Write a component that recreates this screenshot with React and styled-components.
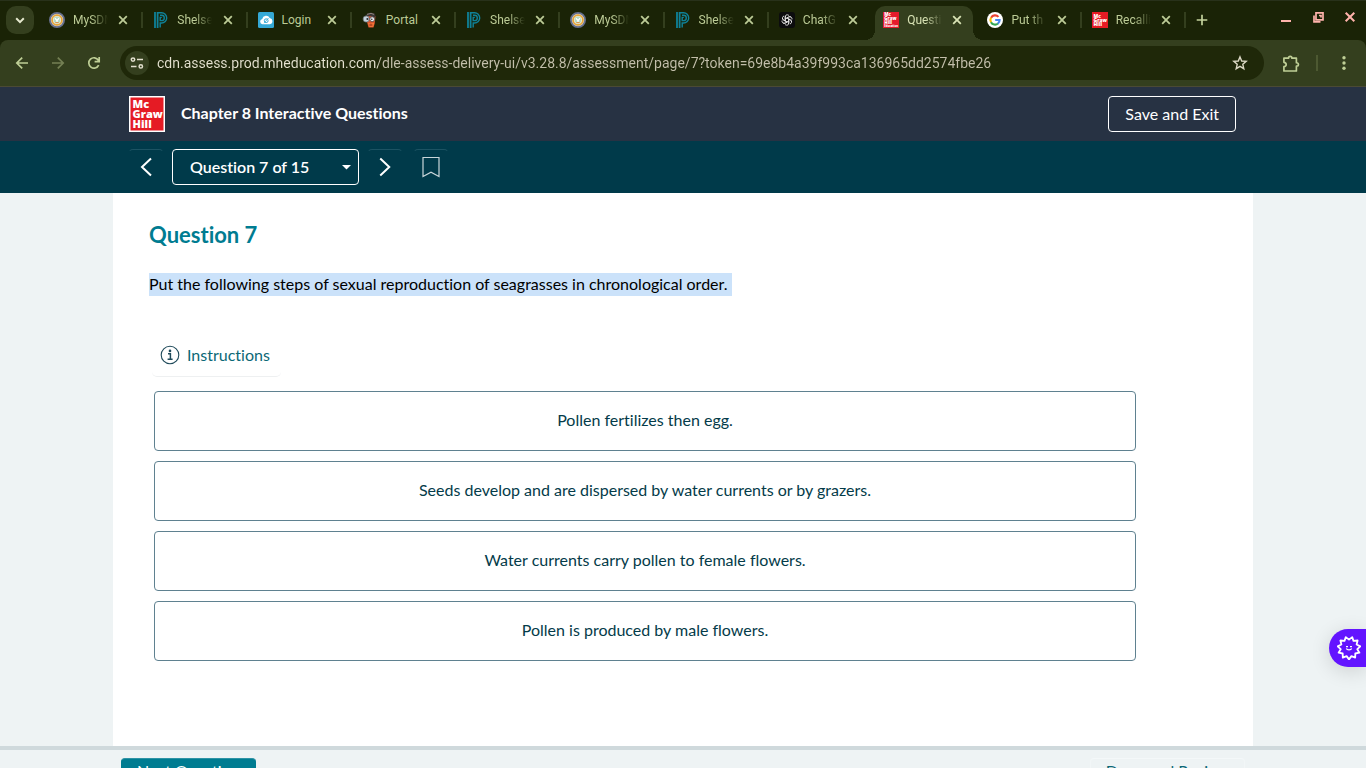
import React from "react";
import styled, { createGlobalStyle, css } from "styled-components";

const ui = `Lato, "Open Sans", sans-serif`;
const chromeFont = `Roboto, "Noto Sans", sans-serif`;

const Global = createGlobalStyle`
  * { box-sizing: border-box; }
  html, body { margin: 0; padding: 0; }
  body { font-family: ${ui}; font-size: 16px; font-variant-ligatures: none; background: #eef3f4; }
  button, input, select { font: inherit; font-variant-ligatures: none; margin: 0; }
  svg { display: block; flex: none; }
`;

const Page = styled.div`
  display: flex;
  flex-direction: column;
  height: 100vh;
  overflow: hidden;
`;

/* ---------- browser frame ---------- */
const TabStrip = styled.div`
  display: flex;
  align-items: center;
  height: 40px;
  padding-left: 6px;
  background: #1a2306;
  box-shadow: inset 0 1px #28311a;
  font-family: ${chromeFont};
  flex: none;
`;

const TabSearch = styled.button`
  display: grid;
  place-items: center;
  width: 28px;
  height: 28px;
  margin-right: 5px;
  padding: 0;
  border: 0;
  border-radius: 10px;
  background: #343f1e;
  color: #e6e9cf;
`;

const Tabs = styled.div`
  display: flex;
  flex: 1;
  min-width: 0;
  height: 100%;
`;

const Tab = styled.div`
  position: relative;
  display: flex;
  align-items: center;
  flex: 1 1 0;
  min-width: 0;
  padding-left: 10px;
  color: ${(p) => (p.$active ? "#d9e3b5" : "#bccb96")};
`;

const ActiveShape = styled.div`
  position: absolute;
  inset: 6px 4px 0 2px;
  border-radius: 10px 10px 0 0;
  background: #343f1e;
  &::before, &::after {
    content: "";
    position: absolute;
    bottom: 0;
    width: 10px;
    height: 10px;
  }
  &::before {
    right: 100%;
    background: radial-gradient(circle at 0 0, transparent 10px, #343f1e 10px);
  }
  &::after {
    left: 100%;
    background: radial-gradient(circle at 100% 0, transparent 10px, #343f1e 10px);
  }
`;

const TabBody = styled.div`
  position: relative;
  display: flex;
  align-items: center;
  flex: 1;
  min-width: 0;
`;

const TabTitle = styled.span`
  flex: 1;
  min-width: 0;
  margin-left: 8px;
  overflow: hidden;
  white-space: nowrap;
  font-size: 12px;
  line-height: 16px;
  ${(p) =>
    p.$fade &&
    css`
      mask-image: linear-gradient(to right, #000 18px, transparent 35px);
    `}
`;

const CloseTab = styled.button`
  display: grid;
  place-items: center;
  width: 16px;
  height: 16px;
  margin: 0 10px 0 5px;
  padding: 0;
  border: 0;
  background: none;
  color: inherit;
`;

const Divider = styled.span`
  width: 2px;
  height: 16px;
  flex: none;
  background: ${(p) => (p.$hidden ? "transparent" : p.$color || "#343f1e")};
`;

const StripEnd = styled.div`
  display: flex;
  align-items: center;
  justify-content: space-between;
  width: 180px;
  padding: 0 8px;
`;

const WindowControls = styled.div`
  display: flex;
  gap: 16px;
  margin-bottom: 6px;
  color: #ffb3ac;
`;

const PlainButton = styled.button`
  display: grid;
  place-items: center;
  width: 16px;
  height: 16px;
  padding: 0;
  border: 0;
  background: none;
  color: ${(p) => p.$color || "inherit"};
`;

const ToolbarBack = styled.div`
  flex: none;
  background: #1a2306;
`;

const Toolbar = styled.div`
  display: flex;
  align-items: center;
  height: 47px;
  padding: 0 14px;
  background: #343f1e;
  border-bottom: 1px solid #4b4a34;
  border-radius: 8px 8px 0 0;
  font-family: ${chromeFont};
`;

const NavIcons = styled.div`
  display: flex;
  gap: 20px;
  margin-right: 18px;
  color: #bfcf96;
`;

const AddressBar = styled.div`
  display: flex;
  align-items: center;
  flex: 1;
  min-width: 0;
  height: 34px;
  padding: 0 16px 0 5px;
  border-radius: 17px;
  background: #1f2809;
`;

const SiteInfo = styled.button`
  display: grid;
  place-items: center;
  width: 24px;
  height: 24px;
  flex: none;
  padding: 0;
  border: 0;
  border-radius: 50%;
  background: #343f1e;
  color: #e3e0cf;
`;

const Url = styled.input`
  flex: 1;
  min-width: 0;
  margin-left: 8px;
  padding: 0;
  border: 0;
  outline: 0;
  font-size: 14px;
  line-height: 20px;
  color: transparent;
  background: linear-gradient(to right, #e5e2d0 221px, #c3bfab 221px);
  background-clip: text;
`;

const ToolbarEnd = styled.div`
  display: flex;
  align-items: center;
  gap: 18px;
  margin-left: 18px;
  color: #bfcf96;
`;

/* ---------- assessment page ---------- */
const Bar = styled.div`
  flex: none;
  background: ${(p) => p.$bg};
`;

const BarInner = styled.div`
  display: flex;
  align-items: center;
  max-width: 1140px;
  height: ${(p) => p.$height}px;
  margin: 0 auto;
  padding: 0 17px 0 ${(p) => p.$left}px;
`;

const Title = styled.h1`
  flex: 1;
  margin: 0 0 0 16px;
  padding-bottom: 2px;
  color: #fff;
  font-size: 16px;
  line-height: 24px;
  font-weight: 700;
`;

const SaveButton = styled.button`
  height: 36px;
  padding: 0 16px 2px;
  border: 1px solid #fff;
  border-radius: 4px;
  background: transparent;
  color: #fff;
  font-size: 16px;
`;

const IconButton = styled.button`
  display: grid;
  place-items: center;
  width: 36px;
  height: 36px;
  padding: 0;
  border: 1px solid transparent;
  border-top-color: #1c5363;
  border-radius: 5px;
  background: transparent;
  color: #fff;
`;

const SelectWrap = styled.label`
  position: relative;
  width: 187px;
  margin: 0 8px;
  color: #fff;
  & > svg {
    position: absolute;
    right: 8px;
    top: 16px;
    pointer-events: none;
  }
`;

const Select = styled.select`
  display: block;
  appearance: none;
  width: 100%;
  height: 36px;
  padding: 0 17px 2px;
  border: 1px solid #fff;
  border-radius: 4px;
  background: transparent;
  color: #fff;
  font-size: 16px;
  font-weight: 600;
`;

const NextGroup = styled.div`
  display: flex;
  gap: 10px;
`;

const Main = styled.main`
  flex: 1;
  min-height: 0;
  width: 100%;
  max-width: 1140px;
  margin: 0 auto;
  padding: 28px 112px 0 36px;
  background: #fff;
`;

const Heading = styled.h2`
  margin: 0 0 24px;
  color: #007c91;
  font-size: 22px;
  line-height: 28px;
  font-weight: 700;
`;

const Prompt = styled.p`
  margin: 0 0 44px;
  color: #000;
  font-size: 16px;
  line-height: 21px;
  & > mark {
    display: inline-block;
    padding: 0 4px 2px 0;
    background: #cbe2fa;
    color: inherit;
  }
`;

const Instructions = styled.button`
  display: flex;
  align-items: center;
  gap: 7px;
  height: 37px;
  margin: 0 3px 14px;
  padding: 0 11px 7px 8px;
  border: 0;
  border-bottom: 1px solid #eef0f1;
  border-radius: 5px;
  background: transparent;
  color: #0b6876;
  font-size: 16px;
  line-height: 20px;
`;

const Choices = styled.ul`
  display: flex;
  flex-direction: column;
  gap: 10px;
  margin: 0;
  padding: 0 5px;
  list-style: none;
`;

const Choice = styled.button`
  display: block;
  width: 100%;
  height: 60px;
  padding: 0 16px 2px;
  border: 1px solid #5f8190;
  border-radius: 4px;
  background: #fff;
  color: #043b49;
  font-size: 16px;
  line-height: 24px;
`;

const Footer = styled.footer`
  flex: none;
  height: 22px;
  overflow: hidden;
  background: #eef3f4;
  border-top: 4px solid #cfd9dc;
`;

const FooterInner = styled.div`
  display: flex;
  justify-content: space-between;
  max-width: 1140px;
  margin: 0 auto;
  padding: 8px;
`;

const FooterButton = styled.button`
  height: 36px;
  padding: 0 15px 10px;
  border: 1px solid ${(p) => (p.$primary ? "#007c91" : "#f2f6f7")};
  border-top-color: ${(p) => (p.$primary ? "#2e93a5" : "#f4f8f9")};
  border-radius: 4px;
  background: ${(p) => (p.$primary ? "#007c91" : "transparent")};
  color: ${(p) => (p.$primary ? "#fff" : "#0b6876")};
  font-size: 16px;
  line-height: 24px;
`;

const Assistant = styled.button`
  position: fixed;
  right: 0;
  bottom: 101px;
  display: flex;
  align-items: center;
  width: 37px;
  height: 38px;
  padding: 0 0 0 8px;
  border: 0;
  border-radius: 19px 0 0 19px;
  background: #6314ff;
  color: #fff;
  box-shadow: 0 4px 20px rgba(0, 0, 0, 0.14);
`;

/* ---------- drawings ---------- */
const Line = ({ size = 16, w = 2, children, ...rest }) => (
  <svg width={size} height={size} viewBox="0 0 16 16" fill="none" stroke="currentColor" strokeWidth={w} aria-hidden="true" {...rest}>
    {children}
  </svg>
);

const McGraw = ({ size, framed }) => (
  <svg width={size} height={size} viewBox="0 0 36 36" aria-label="McGraw Hill">
    <rect width="36" height="36" fill={framed ? "#fff" : "#e51b24"} />
    {framed && <rect x="1.5" y="1.5" width="33" height="33" fill="#e51b24" />}
    <text fill="#fff" fontFamily='"Open Sans", sans-serif' fontWeight="800" fontSize="11">
      <tspan x="3.6" y="12.4">Mc</tspan>
      <tspan x="3.6" y="22">Graw</tspan>
      <tspan x="3.6" y="31.6">Hill</tspan>
    </text>
  </svg>
);

const McGrawEducation = () => (
  <svg width="16" height="16" viewBox="0 0 36 36" aria-label="McGraw Hill Education">
    <rect width="36" height="36" fill="#e51b2c" />
    <text fill="#fff" fontFamily='"Open Sans", sans-serif' fontWeight="800" fontSize="10">
      <tspan x="3" y="10">Mc</tspan>
      <tspan x="3" y="18.5">Graw</tspan>
      <tspan x="3" y="27">Hill</tspan>
      <tspan x="3" y="34" fontSize="6">Education</tspan>
    </text>
  </svg>
);

const Seal = () => (
  <svg width="16" height="16" viewBox="0 0 16 16">
    <circle cx="8" cy="8" r="7.1" fill="#d9d2c4" stroke="#66708f" strokeWidth="1.8" />
    <circle cx="8" cy="8" r="4.9" fill="#f7eedb" stroke="#e5a436" strokeWidth="1.7" />
    <circle cx="8" cy="8" r="3.4" fill="#b5dcc2" />
    <path d="M6 6.1 8 8.7l2-2.6M8 8.7v2.1" stroke="#fff" strokeWidth="1.3" fill="none" />
    <path d="M6.4 10.6h3.2" stroke="#dc8a44" strokeWidth="1" />
  </svg>
);

const PowerSchool = () => (
  <svg width="16" height="16" viewBox="0 0 16 16" fill="none" stroke="#0f8299">
    <path d="M2 0v16M4.6 0v16" strokeWidth="1.8" />
    <path d="M5 .8h3.6a5 5 0 0 1 0 10.2H7.2V15.5M7 3.2h1.6a2.7 2.7 0 0 1 0 5.4H7.2V5.4h1.6" strokeWidth="1.4" />
  </svg>
);

const CloudLogin = () => (
  <svg width="16" height="16" viewBox="0 0 16 16">
    <rect width="16" height="16" rx="1.5" fill="#35a9d6" />
    <path d="M4.5 12.3a2.7 2.7 0 0 1-.3-5.3A4 4 0 0 1 11.7 6a3.2 3.2 0 0 1 .2 6.3z" fill="#fff" />
    <circle cx="8.2" cy="8.7" r="1.9" fill="none" stroke="#35a9d6" strokeWidth="1" />
    <path d="M6 11.2 10.5 6" stroke="#35a9d6" strokeWidth=".8" />
  </svg>
);

const PortalIcon = () => (
  <svg width="16" height="16" viewBox="0 0 16 16">
    <path d="M4 4h9.5l-.8 7.5-1.2 4H6.5L5 10z" fill="#d9542c" />
    <path d="M3 4.2 5.4 1.6 9 .6l4 1.2.6 3.4-1.2.6L9 4.2z" fill="#3c3634" />
    <path d="M5 2.4 9 1.4l3 1" stroke="#8d8580" fill="none" />
    <circle cx="4.2" cy="7" r="3.1" fill="#c3d3dc" stroke="#6c7478" strokeWidth=".8" />
    <circle cx="10.2" cy="7.2" r="2.4" fill="#eef3f5" stroke="#4b4d50" strokeWidth=".8" />
    <circle cx="5.4" cy="7" r="1" fill="#2b2b2b" />
    <circle cx="9.8" cy="7.2" r=".8" fill="#2b2b2b" />
    <path d="m6 10.6 2.6 1.2 3.6-1-1 4H7.2z" fill="#f4793a" />
    <path d="M7.4 13h3" stroke="#7c1c12" />
  </svg>
);

const ChatIcon = () => (
  <svg width="16" height="16" viewBox="0 0 16 16">
    <rect width="16" height="16" rx="3" fill="#0c0c0e" />
    <g fill="none" stroke="#e8e8e8" strokeWidth=".8">
      {[0, 60, 120, 180, 240, 300].map((a) => (
        <path key={a} transform={`rotate(${a} 8 8)`} d="M6.2 9V4.9a2.2 2.2 0 0 1 3.8-1.4M6.2 7 9.7 5a2.2 2.2 0 0 1 2.2 0" />
      ))}
    </g>
  </svg>
);

const GoogleIcon = () => (
  <svg width="16" height="16" viewBox="0 0 16 16" fill="none" strokeWidth="2.1">
    <circle cx="8" cy="8" r="8" fill="#fff" />
    <path d="M11.5 4.9A4.6 4.6 0 0 0 4.1 5.7" stroke="#ea4335" />
    <path d="M4.1 5.6a4.6 4.6 0 0 0 0 4.8" stroke="#fbbc05" />
    <path d="M4 10.2a4.6 4.6 0 0 0 7 1.3" stroke="#34a853" />
    <path d="M8.2 8h4.4a4.6 4.6 0 0 1-1.7 3.6" stroke="#4285f4" />
  </svg>
);

const tabs = [
  { title: "MySDM", icon: <Seal />, fade: true },
  { title: "Shelse", icon: <PowerSchool />, fade: true },
  { title: "Login", icon: <CloudLogin /> },
  { title: "Portal", icon: <PortalIcon /> },
  { title: "Shelse", icon: <PowerSchool />, fade: true },
  { title: "MySDM", icon: <Seal />, fade: true },
  { title: "Shelse", icon: <PowerSchool />, fade: true },
  { title: "ChatG", icon: <ChatIcon />, fade: true, last: true },
  { title: "Questi", icon: <McGrawEducation />, fade: true, active: true, last: true },
  { title: "Put th", icon: <GoogleIcon />, fade: true },
  { title: "Recalli", icon: <McGraw size={16} />, fade: true },
];

const choices = [
  "Pollen fertilizes then egg.",
  "Seeds develop and are dispersed by water currents or by grazers.",
  "Water currents carry pollen to female flowers.",
  "Pollen is produced by male flowers.",
];

const burst = Array.from({ length: 22 }, (_, i) => {
  const angle = (Math.PI * 2 * i) / 22 + Math.PI / 2;
  const radius = i % 2 ? 8.4 : 11.4;
  return `${(12 + radius * Math.cos(angle)).toFixed(1)},${(12 + radius * Math.sin(angle)).toFixed(1)}`;
}).join(" ");

function BrowserChrome() {
  return (
    <>
      <TabStrip>
        <TabSearch aria-label="Search tabs">
          <Line><path d="m4.2 6.3 3.8 3.8 3.8-3.8" /></Line>
        </TabSearch>
        <Tabs>
          {tabs.map((t, i) => (
            <Tab key={i} $active={t.active}>
              {t.active && <ActiveShape />}
              <TabBody>
                {t.icon}
                <TabTitle $fade={t.fade}>{t.title}</TabTitle>
                <CloseTab aria-label="Close tab">
                  <Line w={1.8}><path d="m4.2 4.2 7.6 7.6m0-7.6-7.6 7.6" /></Line>
                </CloseTab>
                <Divider $hidden={t.last} />
              </TabBody>
            </Tab>
          ))}
        </Tabs>
        <StripEnd>
          <PlainButton aria-label="New tab" $color="#c3d29c">
            <Line w={1.7}><path d="M8 2.7v10.6M2.7 8h10.6" /></Line>
          </PlainButton>
          <WindowControls>
            <PlainButton aria-label="Minimize">
              <Line><path d="M3 12h10" /></Line>
            </PlainButton>
            <PlainButton aria-label="Restore">
              <Line w={1.7}><path d="M6 3.9h7v7H6zM4 6.5v6.4h6.5M9 6.5h2v2" /></Line>
            </PlainButton>
            <PlainButton aria-label="Close window">
              <Line><path d="m3.7 3.7 8.6 8.6m0-8.6-8.6 8.6" /></Line>
            </PlainButton>
          </WindowControls>
        </StripEnd>
      </TabStrip>
      <ToolbarBack>
        <Toolbar>
          <NavIcons>
            <PlainButton aria-label="Back">
              <Line w={1.7}><path d="M14 8H3M8.2 2.6 2.8 8l5.4 5.4" /></Line>
            </PlainButton>
            <PlainButton aria-label="Forward" $color="#748054">
              <Line w={1.7}><path d="M2 8h11M7.8 2.6 13.2 8l-5.4 5.4" /></Line>
            </PlainButton>
            <PlainButton aria-label="Reload">
              <Line w={1.7}><path d="M12.7 10.2A5.2 5.2 0 1 1 12.4 5.2M13.2 2v4.6H8.6" /></Line>
            </PlainButton>
          </NavIcons>
          <AddressBar>
            <SiteInfo aria-label="View site information">
              <Line w={1.5}>
                <circle cx="4" cy="4.6" r="1.7" />
                <path d="M8 4.6h6M2 11.4h5.5" />
                <circle cx="11.8" cy="11.4" r="1.7" />
              </Line>
            </SiteInfo>
            <Url
              aria-label="Address"
              readOnly
              value="cdn.assess.prod.mheducation.com/dle-assess-delivery-ui/v3.28.8/assessment/page/7?token=69e8b4a39f993ca136965dd2574fbe26"
            />
            <PlainButton aria-label="Bookmark this tab" $color="#dcd9c5">
              <Line w={1.4}>
                <path d="m8 1.9 1.7 4.1 4.5.4-3.4 2.9 1 4.4L8 11.4l-3.8 2.3 1-4.4L1.8 6.4 6.3 6z" />
              </Line>
            </PlainButton>
          </AddressBar>
          <ToolbarEnd>
            <PlainButton aria-label="Extensions">
              <Line size={18} w={1.5} strokeLinejoin="round">
                <path d="M1.7 2.8h4.1c0-2.1 3-2.1 3 0h4v4.1c2.4 0 2.4 3 0 3v4.3H1.7v-3.8c2.7-.4 2.7-3.5 0-3.9z" />
              </Line>
            </PlainButton>
            <Divider $color="#4d5932" />
            <PlainButton aria-label="Browser menu">
              <svg width="16" height="16" fill="currentColor">
                <circle cx="8" cy="2.8" r="1.7" /><circle cx="8" cy="8" r="1.7" /><circle cx="8" cy="13.2" r="1.7" />
              </svg>
            </PlainButton>
          </ToolbarEnd>
        </Toolbar>
      </ToolbarBack>
    </>
  );
}

export default function App() {
  return (
    <Page>
      <Global />
      <BrowserChrome />
      <Bar as="header" $bg="#273243">
        <BarInner $height={54} $left={16}>
          <McGraw size={36} framed />
          <Title>Chapter 8 Interactive Questions</Title>
          <SaveButton>Save and Exit</SaveButton>
        </BarInner>
      </Bar>
      <Bar as="nav" $bg="#003a4a">
        <BarInner $height={52} $left={15}>
          <IconButton aria-label="Previous question">
            <Line size={20} w={1.6}><path d="M12 1.2 4.8 8l7.2 6.8" /></Line>
          </IconButton>
          <SelectWrap>
            <Select aria-label="Question" defaultValue="7">
              <option value="7">Question 7 of 15</option>
            </Select>
            <svg width="9" height="5" viewBox="0 0 9 5"><path d="M0 0h9L4.5 4.5z" fill="#fff" /></svg>
          </SelectWrap>
          <NextGroup>
            <IconButton aria-label="Next question">
              <Line size={20} w={1.6}><path d="m4.2 1.2 7.2 6.8-7.2 6.8" /></Line>
            </IconButton>
            <IconButton aria-label="Bookmark question">
              <svg width="18" height="22" fill="none" stroke="#c9d6da" strokeWidth="1.2">
                <path d="M1 1.5h16v19l-8-4.3-8 4.3z" />
              </svg>
            </IconButton>
          </NextGroup>
        </BarInner>
      </Bar>
      <Main>
        <Heading>Question 7</Heading>
        <Prompt>
          <mark>Put the following steps of sexual reproduction of seagrasses in chronological order.</mark>
        </Prompt>
        <Instructions>
          <svg width="20" height="20" fill="none" stroke="#1f4a5a">
            <circle cx="10" cy="10" r="8.8" strokeWidth="1.1" />
            <path d="M8 8.8h2.4v5M7.6 14.2h5" strokeWidth="1.5" />
            <circle cx="10" cy="5.9" r="1.3" fill="#1f4a5a" stroke="none" />
          </svg>
          Instructions
        </Instructions>
        <Choices>
          {choices.map((c) => (
            <li key={c}><Choice>{c}</Choice></li>
          ))}
        </Choices>
      </Main>
      <Footer>
        <FooterInner>
          <FooterButton $primary>Next Question</FooterButton>
          <FooterButton>Done and Review</FooterButton>
        </FooterInner>
      </Footer>
      <Assistant aria-label="Open assistant">
        <svg width="24" height="24" viewBox="0 0 24 24" fill="none" stroke="currentColor" strokeWidth="1.8" strokeLinejoin="round">
          <polygon points={burst} />
          <path d="M9.3 12.6c.8 1.8 4.6 1.8 5.4 0M9 10.6h2M13 10.6h2" strokeWidth="1.2" />
        </svg>
      </Assistant>
    </Page>
  );
}
